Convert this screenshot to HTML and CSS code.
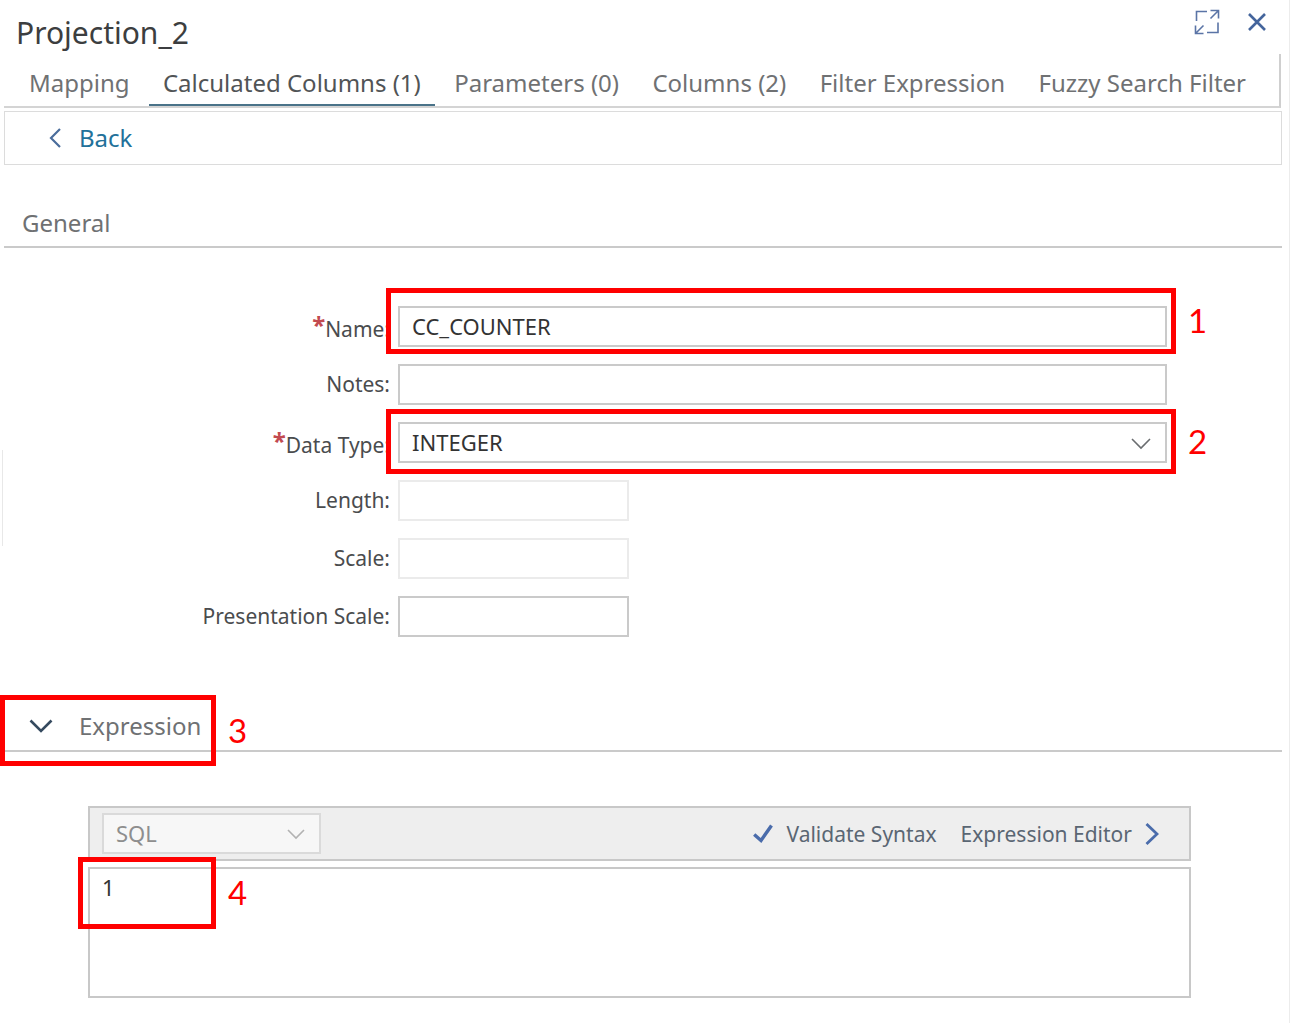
FILE: index.html
```html
<!DOCTYPE html>
<html lang="en">
<head>
  <meta charset="utf-8">
  <meta name="viewport" content="width=device-width, initial-scale=1">
  <title>Projection_2</title>
  <link rel="stylesheet" href="styles.css">
</head>
<body>
  <main class="panel">
    <span class="splitter"></span>

    <header class="panel-header">
      <h1 class="title">Projection_2</h1>
      <div class="window-actions">
        <button class="icon-button" type="button" aria-label="Maximize">
          <svg width="26" height="26" viewBox="0 0 26 26" fill="none" stroke="#5a74a6" stroke-width="1.6">
            <path d="M2.5 12V2.5H13M24 13.500V23.500H13M16.500 1.500H24.500V9.500M24.500 1.500L16.500 9.500M1.500 16.500V24.500H9.500M1.500 24.500L9.500 16.500"/>
          </svg>
        </button>
        <button class="icon-button" type="button" aria-label="Close">
          <svg width="18" height="18" viewBox="0 0 18 18" fill="none" stroke="#44659c" stroke-width="2.6">
            <path d="M1 1L17 17M17 1L1 17"/>
          </svg>
        </button>
      </div>
    </header>

    <nav class="tabs">
      <a class="tab" href="#mapping">Mapping</a>
      <a class="tab tab-active" href="#calculated" aria-current="page">Calculated Columns (1)</a>
      <a class="tab" href="#parameters">Parameters (0)</a>
      <a class="tab" href="#columns">Columns (2)</a>
      <a class="tab" href="#filter">Filter Expression</a>
      <a class="tab" href="#fuzzy">Fuzzy Search Filter</a>
    </nav>

    <div class="back-bar">
      <button class="back" type="button">
        <svg width="12" height="20" viewBox="0 0 12 20" fill="none" stroke="#4a6d9c" stroke-width="2.2">
          <path d="M11 1L2 10L11 19"/>
        </svg>
        Back
      </button>
    </div>

    <section class="section">
      <h2 class="section-title">General</h2>
      <form class="form">
        <label class="label label-required" for="name"><span class="star">*</span>Name:</label>
        <div class="field">
          <input class="input" id="name" type="text" value="CC_COUNTER">
          <div class="callout callout-name"><span class="callout-number">1</span></div>
        </div>

        <label class="label" for="notes">Notes:</label>
        <div class="field"><input class="input" id="notes" type="text"></div>

        <label class="label label-required" for="type"><span class="star">*</span>Data Type:</label>
        <div class="field">
          <select class="input" id="type"><option>INTEGER</option></select>
          <svg class="chevron" width="20" height="12" viewBox="0 0 20 12" fill="none" stroke="#6a6d70" stroke-width="1.600">
            <path d="M1 1L10 10L19 1"/>
          </svg>
          <div class="callout callout-type"><span class="callout-number">2</span></div>
        </div>

        <label class="label" for="length">Length:</label>
        <div class="field field-short"><input class="input" id="length" type="text" disabled></div>

        <label class="label" for="scale">Scale:</label>
        <div class="field field-short"><input class="input" id="scale" type="text" disabled></div>

        <label class="label" for="pscale">Presentation Scale:</label>
        <div class="field field-short"><input class="input" id="pscale" type="text"></div>
      </form>
    </section>

    <section class="section">
      <h2 class="section-title section-title-toggle">
        <button class="toggle" type="button" aria-expanded="true">
          <svg width="24" height="14" viewBox="0 0 24 14" fill="none" stroke="#354a5f" stroke-width="2.6">
            <path d="M1.500 1.500L12 12L22.500 1.500"/>
          </svg>
          Expression
        </button>
        <span class="callout callout-expression"><span class="callout-number">3</span></span>
      </h2>

      <div class="editor">
        <div class="toolbar">
          <div class="field language">
            <select class="input" aria-label="Language" disabled><option>SQL</option></select>
            <svg class="chevron" width="18" height="11" viewBox="0 0 18 11" fill="none" stroke="#b2b2b2" stroke-width="1.600">
              <path d="M1 1L9 9L17 1"/>
            </svg>
          </div>
          <button class="tool" type="button">
            <svg width="20" height="20" viewBox="0 0 20 20" fill="none" stroke="#4a6cab" stroke-width="3.4">
              <path d="M1.200 10.500L8 16.500L18.500 1.500"/>
            </svg>
            Validate Syntax
          </button>
          <button class="tool" type="button">
            Expression Editor
            <svg width="14" height="22" viewBox="0 0 14 22" fill="none" stroke="#4a6cab" stroke-width="2.800">
              <path d="M1.500 1L12 11L1.500 21"/>
            </svg>
          </button>
        </div>
        <div class="code">
          <textarea class="code-input" aria-label="Expression">1</textarea>
          <div class="callout callout-code"><span class="callout-number">4</span></div>
        </div>
      </div>
    </section>
  </main>
</body>
</html>
```
FILE: styles.css
```css
* {
  box-sizing: border-box;
}

body {
  margin: 0;
  background: #fff;
  color: #4a4c4e;
  font-family: "Noto Sans", sans-serif;
  font-size: 21px;
}

button,
input,
select,
textarea {
  font: inherit;
}

button {
  padding: 0;
  border: 0;
  background: none;
}

svg {
  flex: none;
  display: block;
}

.panel {
  position: relative;
  min-height: 100vh;
  padding: 0 7px 24px 4px;
  border-right: 1px solid #ececec;
}

.splitter {
  position: absolute;
  top: 450px;
  left: 2px;
  width: 1px;
  height: 96px;
  background: #e8e8e8;
}

/* Header */

.panel-header {
  display: flex;
  justify-content: space-between;
  padding: 8px 16px 0 12px;
}

.title {
  margin: 0;
  padding-top: 4px;
  color: #3c3e40;
  font-size: 30px;
  font-weight: 400;
  line-height: 42px;
}

.window-actions {
  display: flex;
  gap: 28px;
  height: 28px;
}

.icon-button {
  display: flex;
  align-items: center;
}

/* Tabs */

.tabs {
  display: flex;
  justify-content: space-between;
  margin-right: 1px;
  padding: 8px 19px 0 11px;
  border-right: 2px solid #cfcfcf;
  border-bottom: 2px solid #d4d4d4;
}

.tab {
  padding: 0 14px;
  border-bottom: 2px solid transparent;
  color: #6f7173;
  font-size: 24px;
  line-height: 42px;
  text-decoration: none;
  white-space: nowrap;
}

.tab-active {
  border-bottom-color: #4a7389;
  color: #515456;
}

.back-bar {
  display: flex;
  margin-top: 3px;
  padding-left: 44px;
  border: 1px solid #dcdcdc;
}

.back {
  display: flex;
  align-items: center;
  gap: 18px;
  color: #22719a;
  font-size: 24px;
  line-height: 52px;
}

/* Sections */

.section-title {
  position: relative;
  margin: 0;
  padding: 40px 18px 5px;
  border-bottom: 2px solid #cacaca;
  color: #6f7173;
  font-size: 24px;
  font-weight: 400;
  line-height: 36px;
}

.section-title-toggle {
  padding: 71px 18px 6px 25px;
}

.toggle {
  display: flex;
  align-items: center;
  gap: 26px;
  color: inherit;
}

/* Form */

.form {
  display: grid;
  grid-template-columns: 386px 1fr;
  gap: 17px 8px;
  padding: 58px 115px 0 0;
}

.label {
  line-height: 41px;
  text-align: right;
}

.label-required {
  padding-top: 5px;
  line-height: 36px;
}

.star {
  color: #c24a50;
  font-size: 24px;
  font-weight: 700;
  line-height: 1;
  vertical-align: 3px;
}

.field {
  position: relative;
}

.field-short {
  width: 30%;
}

.input {
  display: block;
  width: 100%;
  height: 41px;
  margin: 0;
  padding: 0 12px 2px;
  border: 2px solid #cacaca;
  border-radius: 0;
  outline: 0;
  appearance: none;
  background: #fff;
  color: #333;
  font-size: 22px;
}

.input:disabled {
  border-color: #ebebeb;
  opacity: 1;
}

.chevron {
  position: absolute;
  top: 16px;
  right: 16px;
  pointer-events: none;
}

/* Expression editor */

.editor {
  display: grid;
  gap: 6px;
  padding: 54px 91px 0 84px;
}

.toolbar {
  display: flex;
  align-items: center;
  gap: 24px;
  padding: 5px 30px 5px 12px;
  border: 2px solid #c8c8c8;
  background: #eee;
}

.language {
  width: 219px;
  margin-right: auto;
}

.language .input:disabled {
  border-color: #dadada;
  background: #f7f7f7;
  color: #8e8e8e;
}

.tool {
  display: flex;
  align-items: center;
  gap: 13px;
  color: #5a6673;
}

.code {
  position: relative;
}

.code-input {
  display: block;
  width: 100%;
  height: 131px;
  padding: 3px 12px;
  border: 2px solid #c8c8c8;
  outline: 0;
  resize: none;
  color: #333;
  font-size: 22px;
}

/* Numbered callouts drawn over the form */

.callout {
  position: absolute;
  border: 5px solid #f00;
  pointer-events: none;
}

.callout-number {
  position: absolute;
  top: 50%;
  left: 100%;
  margin: -23px 0 0 17px;
  color: #f00;
  font-family: Lato, sans-serif;
  font-size: 33px;
  line-height: 44px;
}

.callout-name {
  inset: -18px -9px -7px -12px;
}

.callout-type {
  inset: -13px -9px -11px -12px;
}

.callout-expression {
  top: 58px;
  bottom: -16px;
  left: -4px;
  width: 216px;
}

.callout-code {
  top: -10px;
  left: -10px;
  width: 138px;
  height: 72px;
}
```
